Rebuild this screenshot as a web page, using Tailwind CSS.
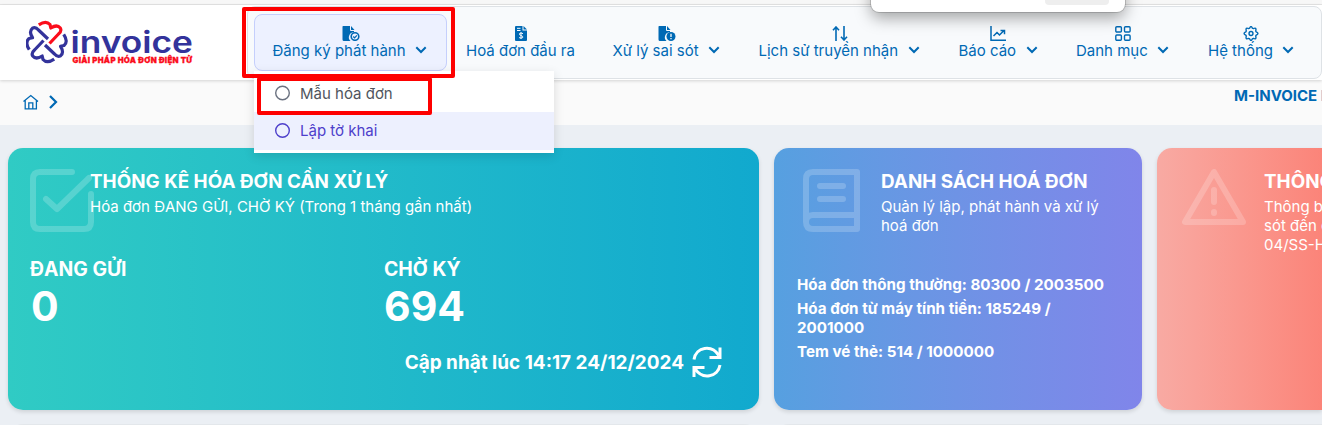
<!DOCTYPE html>
<html lang="vi">
<head>
<meta charset="utf-8">
<title>M-Invoice</title>
<script src="https://cdn.jsdelivr.net/npm/@tailwindcss/browser@4"></script>
</head>
<body class="relative h-[425px] w-[1322px] overflow-hidden bg-[#ebeff4] font-['Inter',sans-serif] text-[15px]">
<svg class="hidden">
  <symbol id="caret" viewBox="0 0 12 8"><path d="M1.3 1.3 6 6l4.7-4.7" fill="none" stroke="currentColor" stroke-width="2"/></symbol>
</svg>

<div class="h-[5px] border-b border-[#e5e5e5] bg-[#f7f7f7]"></div>

<header class="relative z-10 flex h-[75px] bg-white pt-px shadow-[0_1px_3px_rgba(0,0,0,0.16)]">
  <div class="w-[247px] shrink-0 pl-[26px] pt-[14px]">
    <svg class="block" width="168" height="46" viewBox="26 20 168 46">
      <defs><path id="arm" d="M38.800 24.800Q46 20 50 24.500L50.800 28Q57 24 60.300 28Q62 31 58.500 34L49.500 43.500" fill="none" stroke="currentColor" stroke-width="3.200" stroke-linejoin="round"/></defs>
      <g color="#33339b">
        <use href="#arm" transform="rotate(90 46.500 42)"/>
        <use href="#arm" transform="rotate(180 46.500 42)"/>
        <use href="#arm" transform="rotate(270 46.500 42)"/>
      </g>
      <g color="#fb0d1b"><use href="#arm"/></g>
      <text x="70.500" y="52.500" textLength="122.500" lengthAdjust="spacingAndGlyphs" font-family="Inter" font-size="30" font-weight="600" fill="#33339b">invoice</text>
      <text x="72.500" y="63" textLength="119.500" lengthAdjust="spacing" font-family="Inter" font-size="7.800" font-weight="900" fill="#fb0d1b" stroke="#fb0d1b" stroke-width=".3">GIẢI PHÁP HÓA ĐƠN ĐIỆN TỬ</text>
    </svg>
  </div>

  <nav class="flex h-[73px] w-[1075px] shrink-0 rounded-lg border border-[#dee2e6] bg-[#f8fafc] pl-[6px] pt-[7px] leading-[19px] text-[#0069b4]">
    <div class="flex h-[57px] w-[193px] shrink-0 flex-col items-center rounded-lg border border-[#c5cffc] bg-[#edf1ff] pr-[2px] pt-[11px]">
      <svg class="ml-[2px]" width="18" height="15" viewBox="0 0 18 15"><path d="M1 0h7v4q0 1 1 1h3v1.300A5 5 0 0 0 8.500 15H2Q.5 15 .5 13.500V1Q.5 0 1 0Z" fill="currentColor"/><path d="m9 0 3.500 4H9z" fill="currentColor"/><circle cx="13" cy="10.500" r="3.800" fill="none" stroke="currentColor" stroke-width="1.600"/><path d="m11.200 10.500 1.400 1.400 2.300-2.500" fill="none" stroke="currentColor" stroke-width="1.300"/></svg>
      <div class="flex items-center gap-[9px]"><span class="w-[133px] whitespace-nowrap">Đăng ký phát hành</span><svg class="-mt-[2px]" width="12" height="8"><use href="#caret"/></svg></div>
    </div>
    <div class="flex w-[147px] shrink-0 flex-col items-center pt-[12px]">
      <svg width="12" height="15" viewBox="0 0 12 15"><path d="M1 0h6.500v4.500H12V14q0 1-1 1H1q-1 0-1-1V1q0-1 1-1Z" fill="currentColor"/><path d="M8.500 0 12 3.500H8.500z" fill="currentColor"/><path d="M2 2.300h3.500M2 4.500h3.500M6 6v7M8 7.600Q6 6.700 4.600 7.500q-.8 1.400 1.400 2 2.400.7 1.700 2.100-1.600 1-3.600 0" stroke="#f8fafc" fill="none"/></svg>
      <span class="whitespace-nowrap">Hoá đơn đầu ra</span>
    </div>
    <div class="flex w-[146px] shrink-0 flex-col items-center pr-[2px] pt-[12px]">
      <svg class="ml-[2px]" width="18" height="15" viewBox="0 0 18 15"><path d="M1 0h7v4q0 1 1 1h3v1.300A5 5 0 0 0 8.500 15H2Q.5 15 .5 13.500V1Q.5 0 1 0Z" fill="currentColor"/><path d="m9 0 3.500 4H9z" fill="currentColor"/><circle cx="13" cy="10.500" r="4.500" fill="currentColor"/><path d="M13 7.800v3.100m0 1.100v1.200" stroke="#f8fafc" stroke-width="1.300"/></svg>
      <div class="flex items-center gap-[9px]"><span class="w-[86px] whitespace-nowrap">Xử lý sai sót</span><svg class="-mt-[2px]" width="12" height="8"><use href="#caret"/></svg></div>
    </div>
    <div class="flex w-[200px] shrink-0 flex-col items-center pr-[2px] pt-[12px]">
      <svg class="ml-[2px]" width="16" height="15" viewBox="0 0 16 15" fill="none" stroke="currentColor" stroke-width="1.600"><path d="M4 15V1M1 4.200 4 1l3 3.200M12 0v14m-3-3.200 3 3.200 3-3.200"/></svg>
      <div class="flex items-center gap-[9px]"><span class="w-[140px] whitespace-nowrap">Lịch sử truyền nhận</span><svg class="-mt-[2px]" width="12" height="8"><use href="#caret"/></svg></div>
    </div>
    <div class="flex w-[118px] shrink-0 flex-col items-center pr-[2px] pt-[12px]">
      <svg width="16" height="15" viewBox="0 0 16 15" fill="none" stroke="currentColor" stroke-width="1.500"><path d="M1 0v14.300h15M3.500 10l3.500-3.500L9.500 9l4.500-4.500M10.500 4.500h4v3.800"/></svg>
      <div class="flex items-center gap-[9px]"><span class="w-[58px] whitespace-nowrap">Báo cáo</span><svg class="-mt-[2px]" width="12" height="8"><use href="#caret"/></svg></div>
    </div>
    <div class="flex w-[131px] shrink-0 flex-col items-center pr-[2px] pt-[12px]">
      <svg width="16" height="15" viewBox="0 0 16 15" fill="none" stroke="currentColor" stroke-width="1.400"><rect x=".8" y=".7" width="5.600" height="5.300" rx="1"/><rect x="9.500" y=".7" width="5.600" height="5.300" rx="1"/><rect x=".8" y="9" width="5.600" height="5.300" rx="1"/><rect x="9.500" y="9" width="5.600" height="5.300" rx="1"/></svg>
      <div class="flex items-center gap-[9px]"><span class="w-[72px] whitespace-nowrap">Danh mục</span><svg class="-mt-[2px]" width="12" height="8"><use href="#caret"/></svg></div>
    </div>
    <div class="flex w-[124px] shrink-0 flex-col items-center pt-[12px]">
      <svg width="16" height="15" viewBox="0 0 16 16" fill="none" stroke="currentColor" stroke-width="1.500" stroke-linejoin="round"><path d="M6.500 2.400Q8-1.300 9.500 2.400q.5.400 1.100.3Q14 1.200 13.100 5q-.1.800.5 1.300Q17.200 8 13.600 9.700q-.6.500-.5 1.300.9 3.800-2.500 2.300-.6-.1-1.100.3Q8 17.300 6.500 13.600q-.5-.4-1.100-.3Q2 14.800 2.900 11q.1-.8-.5-1.300Q-1.200 8 2.400 6.300 3 5.800 2.900 5 2 1.200 5.400 2.700q.6.100 1.100-.3Z"/><circle cx="8" cy="8" r="2.100"/></svg>
      <div class="flex items-center gap-[9px]"><span class="w-[65px] whitespace-nowrap">Hệ thống</span><svg class="-mt-[2px]" width="12" height="8"><use href="#caret"/></svg></div>
    </div>
  </nav>
</header>

<div class="flex h-[45px] justify-between bg-[#fafafa] pl-[23px] pt-[5px] text-[#0069b4]">
  <div class="flex gap-[10px] pt-[9px]">
    <svg width="16" height="16" viewBox="0 0 16 16" fill="none" stroke="currentColor" stroke-width="1.300"><path d="M.5 7.500 7.800 1.500l7.200 6M2.200 6.500v8.300h11.200V6.500M5.800 14.500V8.800h4v5.700"/></svg>
    <svg class="mt-px" width="9" height="14" viewBox="0 0 9 14"><path d="m1 1 6 6-6 6" fill="none" stroke="currentColor" stroke-width="2.200"/></svg>
  </div>
  <div class="w-[88px] overflow-hidden whitespace-nowrap pt-px font-bold leading-5">M-INVOICE DEMO</div>
</div>

<main class="flex gap-[15px] pl-2 pt-[23px] text-white">
  <section class="h-[262px] w-[751px] shrink-0 rounded-[15px] bg-linear-to-r from-[#30cbc4] to-[#11a9ce] px-[22px] pt-[21px] shadow-[0_2px_4px_rgba(0,0,0,0.12)]">
    <div class="flex h-[88px]">
      <svg class="-mr-1 shrink-0" width="64" height="64" viewBox="0 0 64 64" fill="none" stroke="#fff" stroke-opacity=".2" stroke-width="6" stroke-linecap="round" stroke-linejoin="round"><path d="M42 3H10q-7 0-7 7v43q0 7 7 7h44q7 0 7-7V25M16 30l11 10L59 9"/></svg>
      <div>
        <h2 class="whitespace-nowrap text-[18.85px] font-bold leading-[25px]">THỐNG KÊ HÓA ĐƠN CẦN XỬ LÝ</h2>
        <p class="mt-[3px] whitespace-nowrap leading-[19px]">Hóa đơn ĐANG GỬI, CHỜ KÝ (Trong 1 tháng gần nhất)</p>
      </div>
    </div>
    <div class="flex font-bold">
      <div class="w-[354px]"><div class="text-[19.4px] leading-6">ĐANG GỬI</div><div class="pl-px text-[41px] leading-[50px]">0</div></div>
      <div><div class="text-[19.4px] leading-6">CHỜ KÝ</div><div class="text-[41px] leading-[50px]">694</div></div>
    </div>
    <div class="mt-[15px] flex items-center justify-end gap-2 pr-[15px] text-[18.95px] font-bold">
      <span class="whitespace-nowrap pt-[3px]">Cập nhật lúc 14:17 24/12/2024</span>
      <svg width="30" height="32" viewBox="0 0 30 32" fill="none" stroke="#fff" stroke-width="3"><path d="M2 13.500C4 .5 20-1.500 26.800 9.500M28 1.500V11.500H17.500M28 19C26 31.500 10 34 3 22.500M2 31V21.500h10.500"/></svg>
    </div>
  </section>

  <section class="h-[262px] w-[368px] shrink-0 rounded-[15px] bg-linear-to-r from-[#56a0e0] to-[#8085ea] px-[22px] pt-[21px] shadow-[0_2px_4px_rgba(0,0,0,0.12)]">
    <div class="flex h-[106px]">
      <svg class="ml-[7px] mr-[21px] shrink-0" width="57" height="63" viewBox="0 0 57 63" fill="none" stroke="#fff" stroke-opacity=".2" stroke-width="6" stroke-linejoin="round"><path d="M54 46V3H10q-7 0-7 7v43q0-7 7-7zM54 46v14H10q-7 0-7-7"/><path d="M17 17h23M17 30h23" stroke-linecap="round"/></svg>
      <div>
        <h2 class="whitespace-nowrap text-[18.85px] font-bold leading-[25px]">DANH SÁCH HOÁ ĐƠN</h2>
        <p class="mt-[3px] whitespace-nowrap leading-[19px]">Quản lý lập, phát hành và xử lý<br>hoá đơn</p>
      </div>
    </div>
    <div class="flex flex-col gap-[5px] whitespace-nowrap pl-px text-[15.2px] font-bold leading-[19px]">
      <p>Hóa đơn thông thường: 80300 / 2003500</p>
      <p>Hóa đơn từ máy tính tiền: 185249 /<br>2001000</p>
      <p>Tem vé thẻ: 514 / 1000000</p>
    </div>
  </section>

  <section class="h-[262px] w-[165px] shrink-0 overflow-hidden rounded-l-[15px] bg-linear-to-r from-[#f8aaa3] to-[#fb8479] pl-[25px] pt-[21px] shadow-[0_2px_4px_rgba(0,0,0,0.12)]">
    <div class="flex">
      <svg class="mr-[18px] shrink-0" width="64" height="57" viewBox="0 0 64 57" fill="none" stroke="#fff" stroke-opacity=".2" stroke-width="6" stroke-linejoin="round"><path d="M32 3 3 53h58z"/><path d="M32 21v12M32 43v1" stroke-linecap="round"/></svg>
      <div>
        <h2 class="whitespace-nowrap text-[18.85px] font-bold leading-[25px]">THÔNG BÁO</h2>
        <p class="mt-[3px] whitespace-nowrap leading-[19px]">Thông báo sai<br>sót đến cơ quan<br>04/SS-HĐĐT</p>
      </div>
    </div>
  </section>
</main>

<!-- Top edge of the next row of cards -->
<div class="mt-[14px] flex h-px gap-[15px] overflow-hidden pl-2">
  <div class="h-10 w-[751px] shrink-0 rounded-t-[15px] bg-[#e3e7eb]"></div>
  <div class="h-10 w-[548px] shrink-0 rounded-tl-[15px] bg-[#e3e7eb]"></div>
</div>

<!-- Open submenu -->
<div class="absolute left-[254px] top-[71px] z-20 h-[82px] w-[300px] bg-white pt-[3px] leading-[38px] shadow-[0_3px_10px_rgba(0,0,0,0.13)]">
  <div class="flex h-[38px] items-center gap-[9px] pl-[21px] text-[#50555d]"><svg width="16" height="16" fill="none" stroke="#6b7280" stroke-width="1.400"><circle cx="7.500" cy="8" r="6.800"/></svg><span class="pt-px">Mẫu hóa đơn</span></div>
  <div class="flex h-[38px] items-center gap-[9px] bg-[#edf0fe] pl-[21px] text-[#4d3fcb]"><svg width="16" height="16" fill="none" stroke="currentColor" stroke-width="1.400"><circle cx="7.500" cy="7.500" r="6.800"/></svg>Lập tờ khai</div>
</div>

<!-- Highlight frames -->
<div class="absolute left-[242px] top-[7px] z-30 h-[71px] w-[213px] rounded-[2px] border-4 border-[#fe0000]"></div>
<div class="absolute left-[257px] top-[77px] z-30 h-[38px] w-[175px] rounded-[2px] border-4 border-[#fe0000]"></div>

<!-- Floating window edge -->
<div class="absolute -top-5 left-[871px] z-40 flex h-[32px] w-[254px] justify-end rounded-lg bg-white pr-4 shadow-[0_0_0_1px_rgba(0,0,0,0.15),0_6px_16px_rgba(0,0,0,0.35)]">
  <div class="h-[25px] w-16 rounded bg-[#eeeeee]"></div>
</div>
</body>
</html>
